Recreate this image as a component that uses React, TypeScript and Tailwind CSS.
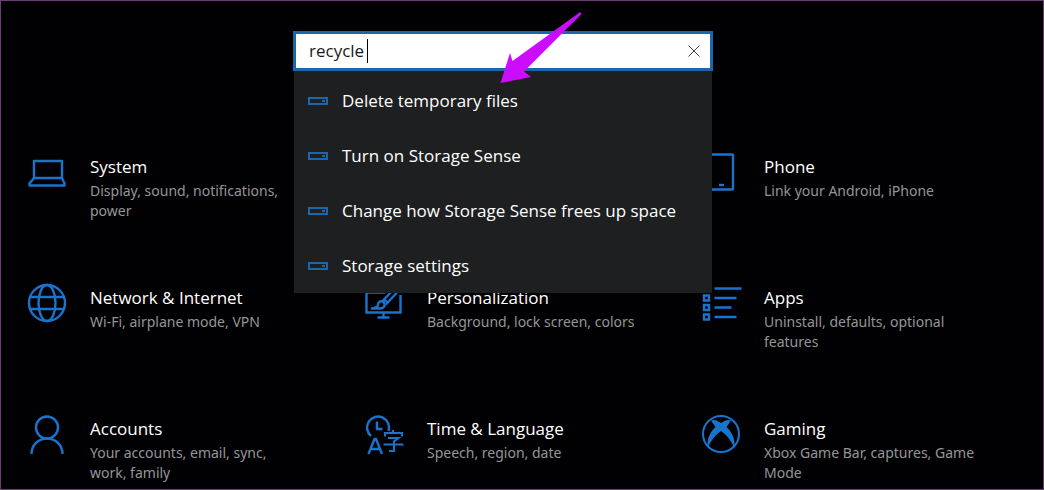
import { useState, type ReactNode } from "react";
import { clsx } from "clsx";

interface Category {
  title: string;
  description: string;
  icon: ReactNode;
  className?: string;
}

const iconProps = {
  width: 38,
  height: 38,
  viewBox: "0 0 38 38",
  fill: "none",
  stroke: "currentColor",
  strokeWidth: 2.4,
  overflow: "visible",
  "aria-hidden": true,
};

const SystemIcon = () => (
  <svg {...iconProps}>
    <path d="M6 8h28v17H6zM6 25 1.500 30.500v2h35v-2L34 25" strokeLinejoin="round" />
  </svg>
);

const PhoneIcon = () => (
  <svg {...iconProps}>
    <rect x="8" y="1.500" width="23" height="35" rx="1" />
    <path d="M17 32h5" />
  </svg>
);

const NetworkIcon = () => (
  <svg {...iconProps}>
    <circle cx="19" cy="19" r="18" />
    <ellipse cx="19" cy="19" rx="8.500" ry="18" />
    <path d="M2.500 13h33M2.500 25h33" />
  </svg>
);

const PersonalizationIcon = () => (
  <svg {...iconProps}>
    <path d="M20 8.500H1.500v20h34V11M18.500 29v4M12.500 33.500h12" />
    <path d="M6 24.500h8c4 .5 7-2.500 5-6-3-2.500-6-.5-6 2.500 0 2-3 3-7 3.500z" />
    <path d="M17.500 17 31 3 36 4 21 20.500M19 15l4 4" />
  </svg>
);

const AppsIcon = () => (
  <svg {...iconProps}>
    <path d="M12.500 4.500h27M12.500 14h22M12.500 23.500h17M12.500 33h22" />
    <path d="M2 11.500h5v5H2zM2 21h5v5H2zM2 30.500h5v5H2z" />
  </svg>
);

const AccountsIcon = () => (
  <svg {...iconProps}>
    <circle cx="19" cy="12.500" r="11" />
    <path d="M3.500 39c0-9 7-15.500 15.500-15.500S34.500 30 34.500 39" />
  </svg>
);

const LanguageIcon = () => (
  <svg {...iconProps}>
    <path d="M6 21a11 11 0 1 1 17.500-5" />
    <path d="M12 6.500V14h5.500" />
    <path d="M3.500 39 9.500 24h1.500L17 39M6 34h8.500" />
    <path d="M28 15v3M20 21.500V18h17v3.500M23 23h10.500L29 26.500V36h-5M18.500 29.500h20" strokeWidth="2" />
  </svg>
);

const GamingIcon = () => (
  <svg {...iconProps}>
    <circle cx="19" cy="19" r="18" strokeWidth="2" />
    <path
      d="M9 5.500c4-1.500 7 .5 10 2.500 3-2 6-4 10-2.500l-4.500 6.500C30 17 34 25 32 32.500 29 25 24 19.500 19 16 14 19.500 9 25 6 32.500 4 25 8 17 13.500 12z"
      fill="currentColor"
      stroke="none"
    />
  </svg>
);

const DriveIcon = () => (
  <svg width="20" height="8" viewBox="0 0 20 8" fill="none" stroke="currentColor" strokeWidth="2" aria-hidden>
    <rect x="1" y="1" width="18" height="6" />
    <path d="M14 4h3" />
  </svg>
);

const categories: Category[] = [
  { title: "System", description: "Display, sound, notifications, power", icon: <SystemIcon /> },
  { title: "Phone", description: "Link your Android, iPhone", icon: <PhoneIcon />, className: "col-start-3" },
  { title: "Network & Internet", description: "Wi-Fi, airplane mode, VPN", icon: <NetworkIcon /> },
  { title: "Personalization", description: "Background, lock screen, colors", icon: <PersonalizationIcon /> },
  { title: "Apps", description: "Uninstall, defaults, optional features", icon: <AppsIcon /> },
  { title: "Accounts", description: "Your accounts, email, sync, work, family", icon: <AccountsIcon /> },
  { title: "Time & Language", description: "Speech, region, date", icon: <LanguageIcon /> },
  { title: "Gaming", description: "Xbox Game Bar, captures, Game Mode", icon: <GamingIcon /> },
];

const suggestions = [
  "Delete temporary files",
  "Turn on Storage Sense",
  "Change how Storage Sense frees up space",
  "Storage settings",
];

function SearchBox() {
  const [query, setQuery] = useState("recycle ");

  return (
    <div className="relative z-10">
      <div className="relative flex h-10 items-center border-3 border-[#1e66ab] bg-white">
        <input
          type="text"
          aria-label="Find a setting"
          value={query}
          onChange={(e) => setQuery(e.target.value)}
          className="h-full min-w-0 flex-1 bg-transparent pb-0.5 pl-[13px] text-[17px] text-[#1a1a1a] caret-transparent outline-none"
        />
        {query === "recycle " && <span className="absolute left-[71px] h-6 w-px bg-black" />}
        <button
          type="button"
          aria-label="Clear search"
          onClick={() => setQuery("")}
          className="flex h-full w-8 items-center justify-center text-[#444]"
        >
          <svg width="12" height="12" viewBox="0 0 12 12" stroke="currentColor" aria-hidden>
            <path d="M.5.5l11 11M11.500.5l-11 11" />
          </svg>
        </button>
      </div>

      <ul className="absolute inset-x-px top-full bg-[#1e1f21] pt-0.5">
        {suggestions.map((item) => (
          <li key={item}>
            <button
              type="button"
              className="flex h-[55px] w-full items-center gap-3.5 pl-3.5 text-left text-[17px] whitespace-nowrap text-white"
            >
              <span className="text-[#1c66ab]">
                <DriveIcon />
              </span>
              {item}
            </button>
          </li>
        ))}
      </ul>

      {/* pointer to the first suggestion */}
      <svg
        className="pointer-events-none absolute -top-5 left-[207px] text-[#cc0cff]"
        width="82"
        height="74"
        viewBox="0 0 82 74"
        fill="currentColor"
        aria-hidden
      >
        <path d="M79.500 1.500Q82 1 81 3.500L24 60.500 31 66 .5 72 10 42 12.500 50z" />
      </svg>
    </div>
  );
}

function CategoryLink({ title, description, icon, className }: Category) {
  return (
    <a href="#" className={clsx("flex items-start gap-6", className)}>
      <span className="shrink-0 text-[#1874cc]">{icon}</span>
      <span className="w-[214px]">
        <span className="block text-[17px] leading-7 text-white">{title}</span>
        <span className="block font-['Noto_Sans',sans-serif] text-[14px] leading-5 text-[#959598]">{description}</span>
      </span>
    </a>
  );
}

export default function App() {
  return (
    <div className="min-h-screen overflow-hidden border border-[#6b3f73] bg-[#010103] font-['Open_Sans','Noto_Sans',sans-serif]">
      <header className="pt-[30px] pr-[330px] pl-[292px]">
        <SearchBox />
      </header>
      <main className="mt-[82px] grid grid-cols-3 gap-y-[63px] pr-1 pl-[27px]">
        {categories.map((category) => (
          <CategoryLink key={category.title} {...category} />
        ))}
      </main>
    </div>
  );
}
